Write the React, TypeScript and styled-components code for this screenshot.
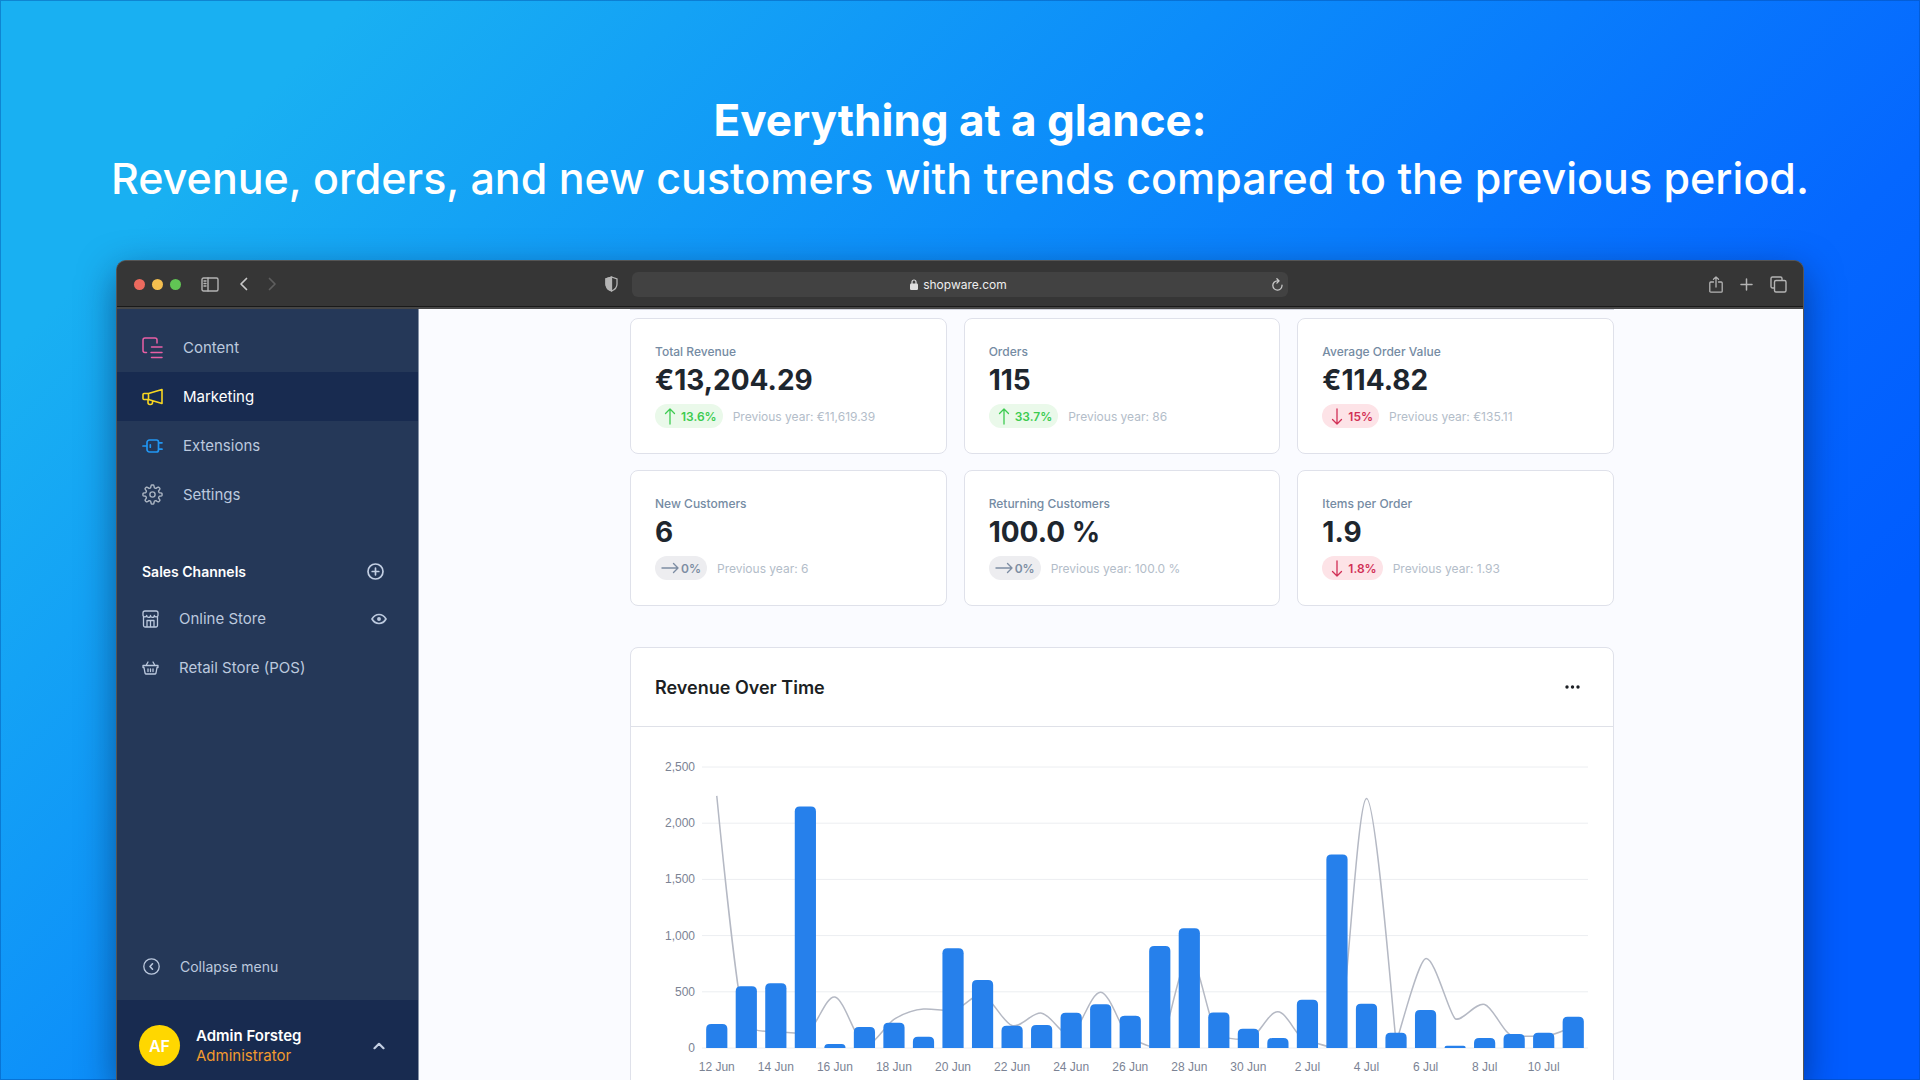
import React from 'react';
import styled, { createGlobalStyle } from 'styled-components';

const Global = createGlobalStyle`
  *, *::before, *::after { box-sizing: border-box; }
  body { margin: 0; font-family: Inter, "Liberation Sans", sans-serif; }
  h1, h2, p { margin: 0; }
  button { font: inherit; color: inherit; background: none; border: 0; padding: 0; }
  svg { display: block; flex: none; }
`;

const Stage = styled.div`
  height: 100vh;
  display: flex;
  flex-direction: column;
  overflow: hidden;
  padding: 91px 116px 0;
  background: linear-gradient(135deg, #19b0f2 0%, #19b0f2 12%, #0c8cfa 41%, #0567ff 69%, #005cff 83%, #005cff 100%);
  box-shadow: inset 0 0 0 1px rgba(0, 70, 160, 0.4);
`;

const Headline = styled.h1`
  color: #fff;
  text-align: center;
  font-size: 43px;
  line-height: 58px;
  font-weight: 500;
  white-space: nowrap;
  margin-bottom: 53px;
  display: flex;
  flex-direction: column;
  align-items: center;
  strong { font-size: 44px; font-weight: 700; }
`;

const Browser = styled.div`
  flex: 1;
  min-height: 0;
  display: flex;
  flex-direction: column;
  border: 1px solid #555;
  border-bottom: 0;
  border-radius: 10px 10px 0 0;
  overflow: hidden;
  background: #363636;
  box-shadow: 0 12px 36px rgba(0, 20, 60, 0.5);
`;

const Toolbar = styled.div`
  height: 48px;
  flex: none;
  display: grid;
  grid-template-columns: 1fr 656px 1fr;
  align-items: center;
  background: #363636;
  border-bottom: 2px solid #464646;
  box-shadow: inset 0 -1px #1a1a1a;
  color: #b4b4b4;
`;

const ToolGroup = styled.div<{ $end?: boolean }>`
  display: flex;
  align-items: center;
  gap: ${(p) => (p.$end ? 17 : 20)}px;
  justify-content: ${(p) => (p.$end ? 'flex-end' : 'flex-start')};
  padding: ${(p) => (p.$end ? '0 16px 0 0' : '0 14px 0 17px')};
`;

const Lights = styled.div`
  display: flex;
  gap: 7px;
`;
const Light = styled.span<{ $c: string }>`
  width: 11px;
  height: 11px;
  border-radius: 50%;
  background: ${(p) => p.$c};
`;

const Spacer = styled.span`
  flex: 1;
`;

const Address = styled.div`
  display: flex;
  align-items: center;
  height: 25px;
  border-radius: 6px;
  background: #424242;
  color: #eee;
  font-size: 12px;
  padding: 0 5px;
`;
const Host = styled.span`
  flex: 1;
  display: flex;
  justify-content: center;
  align-items: center;
  gap: 5px;
  padding-left: 8px;
`;

const Body = styled.div`
  flex: 1;
  min-height: 0;
  display: flex;
`;

const Sidebar = styled.aside`
  width: 302px;
  flex: none;
  display: flex;
  flex-direction: column;
  background: #253858;
  color: #bcc9de;
  font-size: 15px;
  padding-top: 14px;
  border-right: 1px solid #8592a6;
`;

const NavLink = styled.a<{ $active?: boolean }>`
  display: flex;
  align-items: center;
  gap: 20px;
  height: 49px;
  padding: 0 25px;
  color: ${(p) => (p.$active ? '#fff' : 'inherit')};
  background: ${(p) => (p.$active ? '#182b50' : 'none')};
  text-decoration: none;
`;

const SectionHead = styled.div`
  display: flex;
  align-items: center;
  justify-content: space-between;
  height: 46px;
  margin-top: 29px;
  padding: 0 34px 0 25px;
  color: #fff;
  font-weight: 600;
  font-size: 14px;
`;

const ChannelRow = styled.div`
  display: flex;
  align-items: center;
  height: 49px;
  padding: 0 31px 0 25px;
`;
const ChannelLink = styled.a`
  flex: 1;
  display: flex;
  align-items: center;
  gap: 20px;
  color: inherit;
  text-decoration: none;
`;

const Collapse = styled.button`
  display: flex;
  align-items: center;
  gap: 20px;
  height: 67px;
  margin-top: auto;
  padding: 0 26px;
  font-size: 14px;
`;

const User = styled.button`
  display: flex;
  align-items: center;
  height: 80px;
  flex: none;
  padding: 11px 33px 0 22px;
  background: #182b50;
  text-align: left;
  line-height: 20px;
`;
const Avatar = styled.span`
  width: 41px;
  height: 41px;
  border-radius: 50%;
  background: #ffd700;
  color: #fff;
  display: grid;
  place-items: center;
  font-weight: 600;
  font-size: 16px;
  margin-right: 16px;
`;
const UserText = styled.span`
  flex: 1;
  display: flex;
  flex-direction: column;
  color: #f29a2e;
  strong { color: #fff; font-weight: 600; }
`;

const Main = styled.main`
  flex: 1;
  min-width: 0;
  background: #fafbff;
  padding: 0 189px 0 211px;
`;

const PreviousEdge = styled.div`
  height: 9px;
  border-top: 1px solid #d0d3dc;
`;

const StatGrid = styled.section`
  display: grid;
  grid-template-columns: repeat(3, 1fr);
  gap: 16px 17px;
`;

const Card = styled.article`
  background: #fff;
  border: 1px solid #dfe1ea;
  border-radius: 8px;
`;

const StatCard = styled(Card)`
  height: 136px;
  padding: 23px 24px 0;
`;
const StatLabel = styled.h2`
  font-size: 12px;
  line-height: 19px;
  font-weight: 500;
  color: #758ba3;
`;
const StatValue = styled.p`
  font-size: 28px;
  line-height: 38px;
  font-weight: 700;
  color: #1e262e;
`;
const StatFoot = styled.div`
  display: flex;
  align-items: center;
  gap: 10px;
  margin-top: 5px;
  font-size: 12px;
  color: #b3bdc9;
`;

type Tone = 'up' | 'down' | 'flat';
const tones: Record<Tone, { bg: string; fg: string }> = {
  up: { bg: '#eaf9ea', fg: '#3ccb50' },
  down: { bg: '#fde3e7', fg: '#d12f55' },
  flat: { bg: '#ededf0', fg: '#7d8da3' },
};
const Badge = styled.span<{ $tone: Tone }>`
  display: flex;
  align-items: center;
  gap: ${(p) => (p.$tone === 'flat' ? 2 : 5)}px;
  height: 24px;
  padding: ${(p) => (p.$tone === 'flat' ? '0 6px' : '0 6px 0 9px')};
  border-radius: 12px;
  font-weight: 600;
  background: ${(p) => tones[p.$tone].bg};
  color: ${(p) => tones[p.$tone].fg};
`;

const ChartCard = styled(Card)`
  margin-top: 41px;
`;
const ChartHead = styled.header`
  display: flex;
  align-items: center;
  justify-content: space-between;
  height: 79px;
  padding: 0 33px 0 24px;
  border-bottom: 1px solid #dfe1e8;
  color: #1c1f24;
  h2 { font-size: 18px; font-weight: 600; }
`;
const ChartSvg = styled.svg`
  width: 100%;
  height: auto;
  font-family: "Liberation Sans", sans-serif;
  font-size: 12px;
`;

const line = { fill: 'none', stroke: 'currentColor', strokeLinecap: 'round', strokeLinejoin: 'round' } as const;

const ContentIcon = () => (
  <svg width="21" height="22" viewBox="0 0 21 22" {...line} stroke="#e95fa5" strokeWidth="1.500">
    <path d="M4.500 15.500H3a2 2 0 0 1-2-2V3a2 2 0 0 1 2-2h10a2 2 0 0 1 2 2v3M9.500 10h10.500M9 15.500h11M9.500 20.500h10.500" />
  </svg>
);
const MarketingIcon = () => (
  <svg width="21" height="18" viewBox="0 0 21 18" {...line} stroke="#f8d621" strokeWidth="1.600">
    <path d="M6.500 5.500 20 1.500v14L6.500 11.500zM6.500 5.500H2a1 1 0 0 0-1 1v4a1 1 0 0 0 1 1h4.500M6 12v2.500a2 2 0 0 0 2 2h.5a2 2 0 0 0 2-2v-1.500" />
  </svg>
);
const ExtensionsIcon = () => (
  <svg width="21" height="16" viewBox="0 0 21 16" {...line} stroke="#2196f3" strokeWidth="1.700">
    <path d="M1 8h4M7.500 2H14.500a2 2 0 0 1 2 2v8a2 2 0 0 1-2 2H7.500a2.500 2.500 0 0 1-2.500-2.500v-7A2.500 2.500 0 0 1 7.500 2zM16.500 4.800h3.500M16.500 11.200h3.500M8.300 6.800v2.400" />
  </svg>
);
const GearIcon = () => {
  const teeth = Array.from({ length: 97 }, (_, i) => {
    const a = (i / 96) * Math.PI * 2;
    const r = 8.200 + 1.400 * Math.tanh(2.500 * Math.cos(a * 8));
    return `${i ? 'L' : 'M'}${(10.5 + r * Math.sin(a)).toFixed(2)} ${(10.5 - r * Math.cos(a)).toFixed(2)}`;
  }).join('');
  return (
    <svg width="21" height="21" viewBox="0 0 21 21" {...line} stroke="#a9b3c1" strokeWidth="1.400">
      <path d={`${teeth}Z`} />
      <circle cx="10.500" cy="10.500" r="2.600" />
    </svg>
  );
};
const StoreIcon = () => (
  <svg width="17" height="18" viewBox="0 0 17 18" {...line} strokeWidth="1.300">
    <path d="M1 5.500V3a2 2 0 0 1 2-2h11a2 2 0 0 1 2 2v2.500a1.900 1.900 0 0 1-3.700 0 1.900 1.900 0 0 1-3.800 0 1.900 1.900 0 0 1-3.800 0A1.900 1.900 0 0 1 1 5.500zM1.500 7v8.500a1.500 1.500 0 0 0 1.500 1.500h11a1.500 1.500 0 0 0 1.500-1.500V7M5 17v-6.500h7V17M8.500 10.500V17" />
  </svg>
);
const BasketIcon = () => (
  <svg width="17" height="14" viewBox="0 0 17 14" {...line} strokeWidth="1.300">
    <path d="M1 4.500h15v2h-1l-1 5.500a1.300 1.300 0 0 1-1.300 1H4.300A1.300 1.300 0 0 1 3 12L2 6.500H1zM4 4.500 6 1M13 4.500 11 1M6 8v2.500M8.500 8v2.500M11 8v2.500" />
  </svg>
);
const PlusCircle = () => (
  <svg width="17" height="17" viewBox="0 0 17 17" {...line} stroke="#c3cfe3" strokeWidth="1.700">
    <circle cx="8.500" cy="8.500" r="7.500" />
    <path d="M8.500 5.200v6.600M5.200 8.500h6.600" />
  </svg>
);
const EyeIcon = () => (
  <svg width="16" height="12" viewBox="0 0 16 12" {...line} strokeWidth="1.700">
    <path d="M1 6c1.700-2.900 4-4.500 7-4.500S13.300 3.100 15 6c-1.700 2.900-4 4.500-7 4.500S2.700 8.900 1 6z" />
    <circle cx="8" cy="6" r="1.100" fill="currentColor" />
  </svg>
);
const CollapseIcon = () => (
  <svg width="17" height="17" viewBox="0 0 17 17" {...line} strokeWidth="1.300">
    <circle cx="8.500" cy="8.500" r="7.700" />
    <path d="M9.500 5.800 7 8.500l2.500 2.700" strokeWidth="1.600" />
  </svg>
);
const ChevronUp = () => (
  <svg width="12" height="8" viewBox="0 0 12 8" {...line} stroke="#c3cfe3" strokeWidth="2.200">
    <path d="M1.500 6.200 6 1.800l4.500 4.400" />
  </svg>
);
const PanelIcon = () => (
  <svg width="18" height="15" viewBox="0 0 18 15" {...line} strokeWidth="1.400">
    <rect x="1" y="1" width="16" height="13" rx="1.500" />
    <path d="M7 1v13M3 4h2M3 6.500h2M3 9h2" />
  </svg>
);
const Chevron = ({ right = false }: { right?: boolean }) => (
  <svg width="9" height="14" viewBox="0 0 9 14" {...line} stroke={right ? '#5e5e5e' : '#c8c8c8'} strokeWidth="1.700">
    <path d={right ? 'M1.500 1.500 7 7l-5.500 5.500' : 'M7.500 1.500 2 7l5.500 5.500'} />
  </svg>
);
const ShieldIcon = () => (
  <svg width="13" height="16" viewBox="0 0 13 16" fill="none" stroke="#b4b4b4" strokeWidth="1.300">
    <path d="M6.500 1 12 2.800V8c0 3.500-2.500 5.800-5.500 7C3.500 13.800 1 11.500 1 8V2.800z" strokeLinejoin="round" />
    <path d="M6.500 1 1 2.800V8c0 3.500 2.500 5.800 5.500 7z" fill="#b4b4b4" />
  </svg>
);
const LockIcon = () => (
  <svg width="8" height="11" viewBox="0 0 8 11">
    <rect y="4.500" width="8" height="6.500" rx="1.200" fill="#ddd" />
    <path d="M2 5V3a2 2 0 0 1 4 0v2" fill="none" stroke="#ddd" strokeWidth="1.200" />
  </svg>
);
const ReloadIcon = () => (
  <svg width="11" height="13" viewBox="0 0 11 13" {...line} stroke="#c8c8c8" strokeWidth="1.300">
    <path d="M10 7.200A4.600 4.600 0 1 1 5.400 2.900h1.400M4.900.8l2.200 2.100-2.200 2.200" />
  </svg>
);
const ShareIcon = () => (
  <svg width="14" height="17" viewBox="0 0 14 17" {...line} strokeWidth="1.300">
    <path d="M4.500 6H1.800a1 1 0 0 0-1 1v8.200a1 1 0 0 0 1 1h10.400a1 1 0 0 0 1-1V7a1 1 0 0 0-1-1H9.500M7 11V1M4.500 3.300 7 .9l2.500 2.400" />
  </svg>
);
const PlusIcon = () => (
  <svg width="13" height="13" viewBox="0 0 13 13" {...line} strokeWidth="1.500">
    <path d="M6.500 1v11M1 6.500h11" />
  </svg>
);
const TabsIcon = () => (
  <svg width="17" height="17" viewBox="0 0 17 17" {...line} strokeWidth="1.400">
    <path d="M4 12H2.500A1.500 1.500 0 0 1 1 10.500v-8A1.500 1.500 0 0 1 2.500 1h8A1.500 1.500 0 0 1 12 2.500V4" />
    <rect x="4.500" y="4.500" width="11.500" height="11.500" rx="1.500" />
  </svg>
);
const TrendArrow = ({ tone }: { tone: Tone }) =>
  tone === 'flat' ? (
    <svg width="18" height="12" viewBox="0 0 18 12" {...line} strokeWidth="1.400">
      <path d="M1 6h16M12.500 1.500 17 6l-4.500 4.500" />
    </svg>
  ) : (
    <svg width="12" height="17" viewBox="0 0 12 17" {...line} strokeWidth="1.300">
      <path d={tone === 'up' ? 'M6 16V1M1.500 5.500 6 1l4.500 4.500' : 'M6 1v15M1.500 11.500 6 16l4.500-4.500'} />
    </svg>
  );

const stats: { label: string; value: string; tone: Tone; change: string; previous: string }[] = [
  { label: 'Total Revenue', value: '€13,204.29', tone: 'up', change: '13.6%', previous: '€11,619.39' },
  { label: 'Orders', value: '115', tone: 'up', change: '33.7%', previous: '86' },
  { label: 'Average Order Value', value: '€114.82', tone: 'down', change: '15%', previous: '€135.11' },
  { label: 'New Customers', value: '6', tone: 'flat', change: '0%', previous: '6' },
  { label: 'Returning Customers', value: '100.0 %', tone: 'flat', change: '0%', previous: '100.0 %' },
  { label: 'Items per Order', value: '1.9', tone: 'down', change: '1.8%', previous: '1.93' },
];

const current = [213, 550, 577, 2148, 35, 186, 225, 100, 888, 606, 198, 204, 313, 390, 287, 908, 1065, 316, 171, 88, 429, 1722, 393, 136, 337, 20, 88, 124, 136, 278];
const previous = [2243, 190, 143, 135, 453, 30, 255, 346, 334, 470, 200, 310, 120, 497, 90, 20, 810, 110, 80, 322, 60, 20, 2220, 60, 795, 262, 387, 105, 105, 190];

const plot = { left: 71, right: 957, top: 40, bottom: 321, max: 2500 };
const step = (plot.right - plot.left) / current.length;
const xAt = (i: number) => plot.left + step * (i + 0.5);
const yAt = (v: number) => plot.bottom - (v / plot.max) * (plot.bottom - plot.top);

/** Cubic spline through the points, its slopes limited so that it does not overshoot. */
function splinePath(values: number[]) {
  const pts = values.map((v, i) => [xAt(i), yAt(v)]);
  const n = pts.length - 1;
  const slope = (i: number) => (pts[i + 1][1] - pts[i][1]) / (pts[i + 1][0] - pts[i][0]);
  const m = pts.map((_, i) => (i === 0 ? slope(0) : i === n ? slope(n - 1) : (slope(i - 1) + slope(i)) / 2));
  for (let i = 0; i < n; i++) {
    const d = slope(i);
    if (Math.abs(d) < 1e-6) {
      m[i] = m[i + 1] = 0;
      continue;
    }
    const a = m[i] / d;
    const b = m[i + 1] / d;
    const s = a * a + b * b;
    if (s > 9) {
      const k = (d * 3) / Math.sqrt(s);
      m[i] = k * a;
      m[i + 1] = k * b;
    }
  }
  const handle = pts.map((_, i) => {
    const w = (pts[Math.min(n, i + 1)][0] - pts[Math.max(0, i - 1)][0]) / (6 * (1 + m[i] * m[i]));
    return [w, m[i] * w];
  });
  let d = `M${pts[0][0]} ${pts[0][1]}`;
  for (let i = 1; i <= n; i++) {
    const [px, py] = pts[i - 1];
    const [x, y] = pts[i];
    d += `C${px + handle[i - 1][0]} ${py + handle[i - 1][1]} ${x - handle[i][0]} ${y - handle[i][1]} ${x} ${y}`;
  }
  return d;
}

const dayLabel = (i: number) => (i < 19 ? `${12 + i} Jun` : `${i - 18} Jul`);

const RevenueChart = () => (
  <ChartSvg viewBox="0 0 982 380" role="img" aria-label="Revenue over time">
    {[0, 500, 1000, 1500, 2000, 2500].map((v) => (
      <g key={v}>
        <line x1={plot.left} x2={plot.right} y1={yAt(v)} y2={yAt(v)} stroke="#eceef1" />
        <text x={64} y={yAt(v) + 4} textAnchor="end" fill="#7b8394">
          {v.toLocaleString('en-US')}
        </text>
      </g>
    ))}
    <path d={splinePath(previous)} fill="none" stroke="#b5b9c4" strokeWidth="1.500" />
    {current.map((v, i) => {
      const y = yAt(v);
      const h = plot.bottom - y;
      const r = Math.min(5, h);
      const x = xAt(i) - 10.6;
      return (
        <path key={i} fill="#2680eb" d={`M${x} ${plot.bottom}v${r - h}q0 ${-r} ${r} ${-r}h${21.2 - 2 * r}q${r} 0 ${r} ${r}v${h - r}z`} />
      );
    })}
    {current.map((_, i) =>
      i % 2 === 0 ? (
        <text key={i} x={xAt(i)} y={plot.bottom + 23} textAnchor="middle" fill="#7b8394">
          {dayLabel(i)}
        </text>
      ) : null,
    )}
  </ChartSvg>
);

export default function App() {
  return (
    <Stage>
      <Global />
      <Headline>
        <strong>Everything at a glance:</strong>
        <span>Revenue, orders, and new customers with trends compared to the previous period.</span>
      </Headline>
      <Browser>
        <Toolbar>
          <ToolGroup>
            <Lights>
              <Light $c="#ec6a5e" />
              <Light $c="#f4bf4f" />
              <Light $c="#61c554" />
            </Lights>
            <button aria-label="Toggle sidebar"><PanelIcon /></button>
            <button aria-label="Back"><Chevron /></button>
            <button aria-label="Forward"><Chevron right /></button>
            <Spacer />
            <ShieldIcon />
          </ToolGroup>
          <Address>
            <Host><LockIcon />shopware.com</Host>
            <button aria-label="Reload"><ReloadIcon /></button>
          </Address>
          <ToolGroup $end>
            <button aria-label="Share"><ShareIcon /></button>
            <button aria-label="New tab"><PlusIcon /></button>
            <button aria-label="Show tabs"><TabsIcon /></button>
          </ToolGroup>
        </Toolbar>
        <Body>
          <Sidebar>
            <nav>
              <NavLink href="#content"><ContentIcon />Content</NavLink>
              <NavLink href="#marketing" $active><MarketingIcon />Marketing</NavLink>
              <NavLink href="#extensions"><ExtensionsIcon />Extensions</NavLink>
              <NavLink href="#settings"><GearIcon />Settings</NavLink>
            </nav>
            <SectionHead>
              Sales Channels
              <button aria-label="Add sales channel"><PlusCircle /></button>
            </SectionHead>
            <ChannelRow>
              <ChannelLink href="#online-store"><StoreIcon />Online Store</ChannelLink>
              <button aria-label="View store"><EyeIcon /></button>
            </ChannelRow>
            <ChannelRow>
              <ChannelLink href="#retail-store"><BasketIcon />Retail Store (POS)</ChannelLink>
            </ChannelRow>
            <Collapse><CollapseIcon />Collapse menu</Collapse>
            <User>
              <Avatar>AF</Avatar>
              <UserText><strong>Admin Forsteg</strong>Administrator</UserText>
              <ChevronUp />
            </User>
          </Sidebar>
          <Main>
            <PreviousEdge />
            <StatGrid>
              {stats.map((s) => (
                <StatCard key={s.label}>
                  <StatLabel>{s.label}</StatLabel>
                  <StatValue>{s.value}</StatValue>
                  <StatFoot>
                    <Badge $tone={s.tone}><TrendArrow tone={s.tone} />{s.change}</Badge>
                    <span>Previous year: {s.previous}</span>
                  </StatFoot>
                </StatCard>
              ))}
            </StatGrid>
            <ChartCard>
              <ChartHead>
                <h2>Revenue Over Time</h2>
                <button aria-label="Chart options">
                  <svg width="15" height="4" viewBox="0 0 15 4" fill="#1c1f24">
                    <circle cx="2" cy="2" r="1.700" />
                    <circle cx="7.500" cy="2" r="1.700" />
                    <circle cx="13" cy="2" r="1.700" />
                  </svg>
                </button>
              </ChartHead>
              <RevenueChart />
            </ChartCard>
          </Main>
        </Body>
      </Browser>
    </Stage>
  );
}
